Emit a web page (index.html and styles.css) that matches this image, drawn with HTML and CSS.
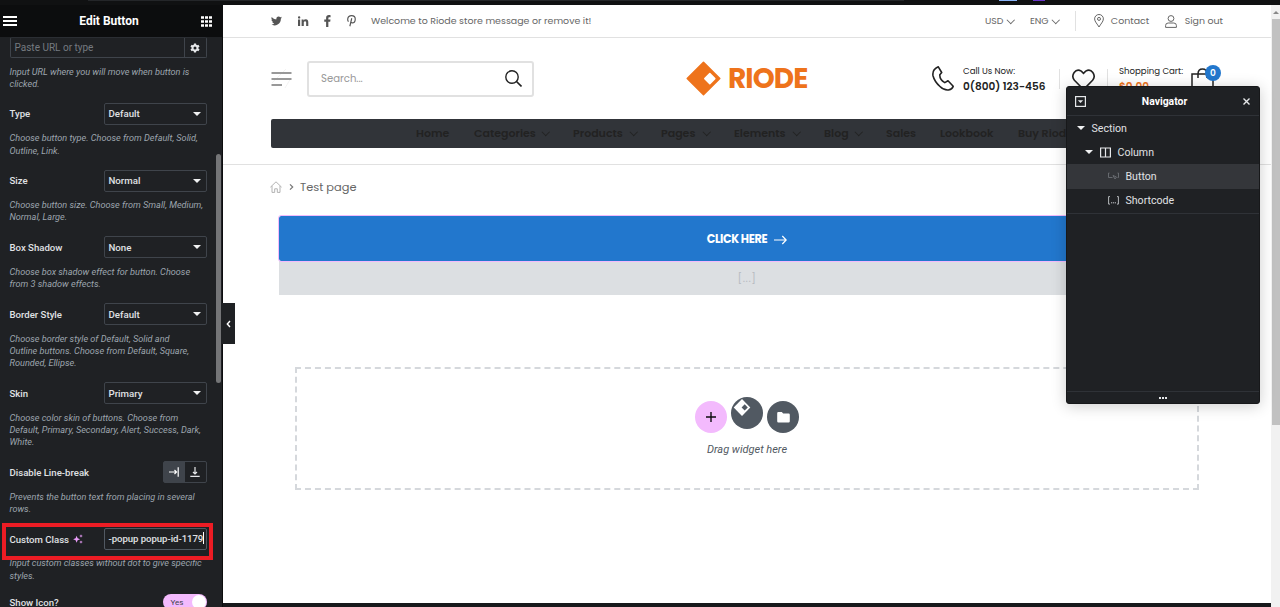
FILE: index.html
```
<!DOCTYPE html>
<html lang="en">
<head>
    <meta charset="UTF-8">
    <meta name="viewport" content="width=device-width, initial-scale=1.0">
    <title>Edit Button</title>
    <link rel="stylesheet" href="styles.css">
</head>
<body>
    <div class="browser-edge"><span class="edge-tab"></span><span class="edge-blue"></span><span class="edge-purple"></span></div>
    <div class="editor">
        <aside class="panel">
            <div class="panel-header">
                <svg width="14" height="10" viewBox="0 0 14 10"><path d="M0 1h14M0 5h14M0 9h14" stroke="#fff" stroke-width="1.8"/></svg>
                <h1>Edit Button</h1>
                <svg width="11" height="11" viewBox="0 0 11 11"><path d="M0 1.5h11M0 5.5h11M0 9.5h11" stroke="#fff" stroke-width="2.6" stroke-dasharray="3 1"/></svg>
            </div>
            <div class="panel-body">
                <div class="controls">
                    <div class="control url-control">
                        <div class="url-input">
                            <span class="placeholder">Paste URL or type</span>
                            <span class="gear"><svg width="10" height="10" viewBox="0 0 10 10"><path d="M5 .4v9.2M1 2.7l8 4.6M1 7.3l8-4.6" stroke="#e6e8ea" stroke-width="2.2"/><circle cx="5" cy="5" r="3.4" fill="#e6e8ea"/><circle cx="5" cy="5" r="1.5" fill="#1f2124"/></svg></span>
                        </div>
                        <p class="desc">Input URL where you will move when button is<br>clicked.</p>
                    </div>
                    <div class="control">
                        <div class="row"><label>Type</label><div class="select">Default</div></div>
                        <p class="desc">Choose button type. Choose from Default, Solid,<br>Outline, Link.</p>
                    </div>
                    <div class="control">
                        <div class="row"><label>Size</label><div class="select">Normal</div></div>
                        <p class="desc">Choose button size. Choose from Small, Medium,<br>Normal, Large.</p>
                    </div>
                    <div class="control">
                        <div class="row"><label>Box Shadow</label><div class="select">None</div></div>
                        <p class="desc">Choose box shadow effect for button. Choose<br>from 3 shadow effects.</p>
                    </div>
                    <div class="control">
                        <div class="row"><label>Border Style</label><div class="select">Default</div></div>
                        <p class="desc">Choose border style of Default, Solid and<br>Outline buttons. Choose from Default, Square,<br>Rounded, Ellipse.</p>
                    </div>
                    <div class="control">
                        <div class="row"><label>Skin</label><div class="select">Primary</div></div>
                        <p class="desc">Choose color skin of buttons. Choose from<br>Default, Primary, Secondary, Alert, Success, Dark,<br>White.</p>
                    </div>
                    <div class="control">
                        <div class="row">
                            <label>Disable Line-break</label>
                            <div class="choices">
                                <span class="choice active"><svg width="10" height="10" viewBox="0 0 10 10"><path d="M0 5h7.5M5.5 3L7.5 5 5.500 7M9.200 .3v9.400" fill="none" stroke="#fff" stroke-width="1.2"/></svg></span>
                                <span class="choice"><svg width="10" height="10" viewBox="0 0 10 10"><path d="M5 0v7M3 5l2 2 2-2M.3 9.300h9.400" fill="none" stroke="#e6e8ea" stroke-width="1.2"/></svg></span>
                            </div>
                        </div>
                        <p class="desc">Prevents the button text from placing in several<br>rows.</p>
                    </div>
                    <div class="control highlighted">
                        <div class="row">
                            <label>Custom Class
                                <svg class="ai" width="10" height="10" viewBox="0 0 10 10"><path d="M3.600 1.800l1 2.500 2.500 1-2.500 1-1 2.500-1-2.500-2.500-1 2.500-1zM8 .2l.5 1.300 1.300.5-1.300.5L8 3.800l-.5-1.300L6.200 2l1.300-.5zM8 6.400l.5 1.200 1.300.5-1.300.5L8 9.800l-.5-1.200-1.300-.5 1.300-.5z" fill="#eb9dfb"/></svg>
                            </label>
                            <div class="text-input">-popup popup-id-1179</div>
                        </div>
                        <p class="desc">Input custom classes without dot to give specific<br>styles.</p>
                    </div>
                    <div class="control">
                        <div class="row switch-row"><label>Show Icon?</label><div class="switch">Yes</div></div>
                    </div>
                </div>
                <div class="panel-scroll"></div>
            </div>
            <div class="collapse"><svg width="5" height="8" viewBox="0 0 5 8"><path d="M4 1L1.300 4 4 7" fill="none" stroke="#fff" stroke-width="1.4"/></svg></div>
        </aside>

        <main class="preview">
            <div class="topbar">
                <div class="social">
                    <svg width="11" height="10" viewBox="0 0 24 20"><path d="M24 2.400c-.9.400-1.800.700-2.800.800 1-.6 1.800-1.600 2.200-2.700-1 .6-2 1-3.100 1.200A4.900 4.900 0 0 0 11.900 6.200C7.800 6 4.200 4 1.700 1A4.900 4.900 0 0 0 3.200 7.500c-.8 0-1.600-.2-2.200-.6 0 2.300 1.600 4.400 3.900 4.900-.7.200-1.500.2-2.200.1.600 2 2.400 3.400 4.600 3.400A9.900 9.900 0 0 1 0 17.300 14 14 0 0 0 21.500 4.900c1-.7 1.800-1.600 2.500-2.500z" fill="#555"/></svg>
                    <svg width="11" height="10" viewBox="0 0 22 20"><path d="M0 7h4.300v13H0zM2.200.3a2.400 2.400 0 1 1 0 4.900 2.400 2.400 0 0 1 0-4.900zM7.200 7h4v1.900c.8-1.400 2.200-2.200 4.200-2.200 4.400 0 5.200 2.700 5.200 6.300v7h-4.300v-6.200c0-1.600-.1-3.400-2.200-3.400s-2.500 1.600-2.500 3.300V20H7.200z" fill="#555"/></svg>
                    <svg width="7" height="12" viewBox="0 0 14 24"><path d="M4.200 24V13.300H.5V9h3.700V5.800C4.200 2.100 6.400.2 9.800.2c1.600 0 3 .2 3.300.3v3.800h-2.200c-1.800 0-2.200.9-2.200 2.100V9H13l-.6 4.300H8.700V24z" fill="#555"/></svg>
                    <svg width="9" height="12" viewBox="0 0 18 24"><path d="M3 13.200C1.700 11.700 1.200 9.800 1.500 7.600 2 3.800 5.200 1.300 9.200 1.300c4.300 0 7.300 2.800 7.300 6.500 0 4.600-2.500 7.900-6.200 7.900-1.700 0-2.700-.8-3-1.800M9.500 6.500L5.700 22.500" fill="none" stroke="#555" stroke-width="2.300"/></svg>
                </div>
                <span class="welcome">Welcome to Riode store message or remove it!</span>
                <div class="top-links">
                    <span class="drop usd">USD</span>
                    <span class="drop eng">ENG</span>
                    <span class="top-line"></span>
                    <svg width="10" height="14" viewBox="0 0 10 14"><path d="M5 13C3.500 10.200.6 7.600.6 4.900a4.400 4.400 0 0 1 8.800 0C9.400 7.600 6.500 10.200 5 13z" fill="none" stroke="#666"/><circle cx="5" cy="4.900" r="1.500" fill="none" stroke="#666"/></svg>
                    <span class="contact">Contact</span>
                    <svg width="12" height="13" viewBox="0 0 12 13"><circle cx="6" cy="3.500" r="2.900" fill="none" stroke="#666"/><path d="M.6 12.400V10.500Q.6 8 3.200 8h5.600q2.600 0 2.600 2.500v1.900z" fill="none" stroke="#666"/></svg>
                    <span class="signout">Sign out</span>
                </div>
            </div>

            <header class="site-header">
                <div class="header-main">
                    <svg class="burger" width="21" height="22" viewBox="0 0 21 22"><path d="M1 15L15 1M14 20l6-10" stroke="#eee" stroke-width=".7"/><path d="M.5 5h20M.5 11h20M.5 17h10.500" stroke="#999" stroke-width="2"/></svg>
                    <div class="search">
                        <span>Search...</span>
                        <svg width="17" height="17" viewBox="0 0 17 17"><circle cx="7" cy="7" r="6.200" fill="none" stroke="#222" stroke-width="1.400"/><path d="M11.500 11.500l5 5" stroke="#222" stroke-width="1.600"/></svg>
                    </div>
                    <div class="logo">
                        <svg width="35" height="35" viewBox="0 0 35 35"><path d="M17.500 1.200L33.800 17.500 17.500 33.800 1.200 17.500z" fill="#ee731b" stroke="#ee731b" stroke-width="1.500" stroke-linejoin="round"/><path d="M23.800 12.600l5 5-5 5-5-5z" fill="#fff" stroke="#fff" stroke-width="1.500" stroke-linejoin="round"/></svg>
                        <span>RIODE</span>
                    </div>
                    <svg class="phone" width="22" height="25" viewBox="0 0 22 25"><path d="M6.300.8L9.700 6.500 7.800 8.800Q7.600 13.500 12.800 16.600L16 14.800 21.200 20.200Q20.500 23 16.500 24 12 24.500 8 20.500 2.500 15.500 1 9.700 0 3.500 6.300.8z" fill="none" stroke="#222" stroke-width="1.600" stroke-linejoin="round"/></svg>
                    <div class="call"><span>Call Us Now:</span><b>0(800) 123-456</b></div>
                    <span class="line"></span>
                    <svg class="heart" width="23" height="22" viewBox="0 0 23 22"><path d="M11.500 20.500L2.400 11.200C-1.600 6.500 3.500-1.500 9.300 2.200L11.500 4.300 13.700 2.200C19.500-1.500 24.600 6.500 20.600 11.200z" fill="none" stroke="#222" stroke-width="1.600"/></svg>
                    <span class="line"></span>
                    <div class="cart-text"><span>Shopping Cart:</span><b>$0.00</b></div>
                    <div class="bag">
                        <svg width="24" height="28" viewBox="0 0 24 28"><path d="M1 6h21v21H1zM7 10V6q0-5 4.500-5T16 6v4" fill="none" stroke="#222" stroke-width="1.500"/></svg>
                        <span class="badge">0</span>
                    </div>
                </div>
                <nav class="menu">
                    <a>Home</a>
                    <a class="has-sub">Categories</a>
                    <a class="has-sub">Products</a>
                    <a class="has-sub">Pages</a>
                    <a class="has-sub">Elements</a>
                    <a class="has-sub">Blog</a>
                    <a>Sales</a>
                    <a>Lookbook</a>
                    <a>Buy Riode!</a>
                </nav>
            </header>

            <div class="breadcrumb">
                <svg width="12" height="12" viewBox="0 0 12 12"><path d="M.4 6.200L6 .8l5.600 5.400M2 5v6.400h2.700V7.800h2.600v3.600H10V5" fill="none" stroke="#aaa" stroke-width=".9"/></svg>
                <svg width="5" height="8" viewBox="0 0 5 8"><path d="M1 1.300L3.700 4 1 6.700" fill="none" stroke="#777" stroke-width="1.200"/></svg>
                <span>Test page</span>
            </div>

            <section class="content">
                <a class="btn">CLICK HERE <svg width="13" height="10" viewBox="0 0 13 10"><path d="M0 5h12M8.300 1L12.200 5 8.300 9" fill="none" stroke="#fff" stroke-width="1.200"/></svg></a>
                <div class="shortcode">[...]</div>
            </section>

            <section class="drop-area">
                <div class="add-buttons">
                    <span class="round add"><svg width="10" height="10" viewBox="0 0 10 10"><path d="M5 0v10M0 5h10" stroke="#0c0d0e" stroke-width="1.400"/></svg></span>
                    <span class="round studio"><svg width="18" height="19" viewBox="0 0 18 19"><path d="M9 1l8.300 8.500L9 18 .7 9.500z" fill="#fff"/><path d="M11.700 6.200l3.100 3.200-3.100 3.200-3.100-3.200z" fill="#515962"/></svg></span>
                    <span class="round"><svg width="13" height="11" viewBox="0 0 13 11"><path d="M1.300 0h3.500l1.400 1.500h5.500q1.100 0 1.100 1.200v6.600q0 1.200-1.200 1.200H1.400Q.2 10.500.2 9.300V1.200Q.2 0 1.300 0z" fill="#fff"/></svg></span>
                </div>
                <p>Drag widget here</p>
            </section>
            <div class="preview-end"></div>
        </main>
        <div class="page-scroll"><span class="arrow"></span><span class="thumb"></span></div>
    </div>

    <div class="navigator">
        <div class="nav-head">
            <svg width="11" height="11" viewBox="0 0 11 11"><rect x=".6" y=".6" width="9.800" height="9.800" fill="none" stroke="#e6e8ea" stroke-width="1.200"/><path d="M2.800 4.200h5.400L5.500 7z" fill="#e6e8ea"/></svg>
            <h2>Navigator</h2>
            <svg width="7" height="7" viewBox="0 0 7 7"><path d="M.5.500l6 6M6.500.500l-6 6" stroke="#e6e8ea" stroke-width="1.400"/></svg>
        </div>
        <div class="tree">
            <div class="node"><span class="tri"></span>Section</div>
            <div class="node level-1"><span class="tri"></span><svg width="11" height="11" viewBox="0 0 11 11"><path d="M.6 1h9.800v9H.6zM5.500 1v9" fill="none" stroke="#e6e8ea" stroke-width="1.200"/></svg>Column</div>
            <div class="node level-2 selected"><svg width="11" height="8" viewBox="0 0 11 8"><path d="M1.500 1H.5v4.500h4M9.500 1h1v4.500h-1M5 3.500l3.500 1.500L7 7z" fill="none" stroke="#74777c" stroke-width=".8"/></svg>Button</div>
            <div class="node level-2"><svg width="11" height="9" viewBox="0 0 11 9"><path d="M2 .6H.6v7.500H2M9 .6h1.400v7.500H9" fill="none" stroke="#c5c8cc" stroke-width=".9"/><path d="M3 6.800h5" stroke="#c5c8cc" stroke-dasharray="1.200 .7"/></svg>Shortcode</div>
        </div>
        <div class="nav-foot"><i></i><i></i><i></i></div>
    </div>
</body>
</html>
```
FILE: styles.css
```
*, *::before, *::after {
    box-sizing: border-box;
}

body {
    margin: 0;
    width: 1280px;
    height: 607px;
    overflow: hidden;
    position: relative;
    background: #fff;
    font-family: Roboto, sans-serif;
}

h1, h2, p {
    margin: 0;
}

svg {
    display: block;
    flex: none;
}

.browser-edge {
    height: 5px;
    background: #101112;
    display: flex;
}

.edge-tab {
    width: 816px;
    height: 1px;
    margin-left: 88px;
    background: #242629;
}

.edge-blue {
    width: 18px;
    height: 1px;
    margin-left: 95px;
    background: #8ab4f8;
}

.edge-purple {
    width: 12px;
    height: 1px;
    margin-left: 16px;
    background: #6a35c9;
}

.editor {
    display: flex;
    height: 602px;
}

/* Left panel */
.panel {
    position: relative;
    width: 223px;
    flex: none;
    background: #1f2124;
    color: #e0e2e5;
    border-right: 1px solid #0c0d0e;
}

.panel-header {
    height: 32px;
    padding: 0 10px 0 3px;
    display: flex;
    align-items: center;
    justify-content: space-between;
    background: #0c0d0e;
}

.panel-header h1 {
    font-size: 12px;
    font-weight: 700;
    color: #fff;
}

.panel-body {
    display: flex;
    height: 570px;
    overflow: hidden;
}

.controls {
    width: 216px;
    padding-left: 9.5px;
}

.panel-scroll {
    width: 5px;
    height: 229px;
    margin-top: 117px;
    border-radius: 3px;
    background: #747577;
}

.control {
    width: 197px;
    padding-bottom: 12.9px;
    position: relative;
}

.row {
    display: flex;
    align-items: center;
    justify-content: space-between;
    height: 22px;
}

.row label {
    display: flex;
    align-items: center;
    gap: 4px;
    font-size: 9.6px;
    font-weight: 500;
}

.desc {
    padding-top: 7.4px;
    font-size: 9.15px;
    line-height: 12.25px;
    font-style: italic;
    white-space: nowrap;
    color: #9da5ae;
}

.url-control {
    padding-bottom: 12.4px;
}

.url-control .desc {
    padding-top: 8px;
}

.url-input {
    display: flex;
    height: 21px;
    border: 1px solid #3f444b;
    border-top-color: #2b2e33;
    border-radius: 2px;
    font-size: 10px;
    line-height: 19px;
}

.placeholder {
    flex: 1;
    padding-left: 4px;
    color: #757a80;
}

.gear {
    width: 22px;
    display: flex;
    align-items: center;
    justify-content: center;
    border-left: 1px solid #3f444b;
}

.select {
    width: 103px;
    height: 22px;
    padding: 0 5px 0 4px;
    display: flex;
    align-items: center;
    justify-content: space-between;
    border: 1px solid #3f444b;
    border-radius: 2px;
    font-size: 9.7px;
    font-weight: 500;
}

.select::after, .tri {
    content: "";
    border: 4px solid transparent;
    border-top: 4px solid #f0f1f2;
    border-bottom: 0;
}

.choices {
    display: flex;
    width: 44px;
    height: 22px;
    border: 1px solid #3f444b;
    border-radius: 2px;
}

.choice {
    flex: 1;
    display: flex;
    align-items: center;
    justify-content: center;
}

.choice.active {
    background: #3f444b;
}

.text-input {
    width: 103px;
    height: 22px;
    padding-left: 4px;
    border: 1px solid #515962;
    border-radius: 2px;
    font-size: 9.6px;
    font-weight: 500;
    letter-spacing: -.05px;
    line-height: 20px;
    white-space: nowrap;
}

.text-input::after {
    content: "";
    display: inline-block;
    width: 1px;
    height: 12px;
    vertical-align: -2px;
    background: #fff;
}

/* red callout frame over the field */
.highlighted::before {
    content: "";
    position: absolute;
    left: -7.5px;
    top: -5px;
    width: 211px;
    height: 37px;
    border: 4px solid #ed1c24;
}

.switch-row {
    height: 15px;
}

.switch {
    width: 44px;
    height: 16px;
    padding: 1px 1px 1px 8px;
    display: flex;
    align-items: center;
    justify-content: space-between;
    border-radius: 8px;
    background: #f3bafd;
    color: #3f444b;
    font-size: 8px;
}

.switch::after {
    content: "";
    width: 14px;
    height: 14px;
    border-radius: 50%;
    background: #fff;
}

.collapse {
    position: absolute;
    left: 222px;
    top: 298px;
    width: 13px;
    height: 41px;
    display: flex;
    align-items: center;
    justify-content: center;
    background: #1f2124;
}

/* Shop preview */
.preview {
    width: 1048px;
    flex: none;
    display: flex;
    flex-direction: column;
    font-family: Poppins, Inter, sans-serif;
    color: #666;
}

.topbar {
    height: 33px;
    padding: 0 48px;
    display: flex;
    align-items: center;
    border-bottom: 1px solid #e1e1e1;
    font-size: 9.45px;
    white-space: nowrap;
}

.social {
    display: flex;
    align-items: center;
    gap: 15.5px;
    width: 100px;
}

.top-links {
    display: flex;
    align-items: center;
    margin-left: auto;
    width: 238px;
}

.drop {
    display: flex;
    align-items: center;
    justify-content: space-between;
    width: 30px;
    font-size: 9.4px;
}

.drop::after, .has-sub::after {
    content: "";
    width: 5.5px;
    height: 5.5px;
    margin: 0 1px 3px 0;
    border: solid currentColor;
    border-width: 0 1.4px 1.4px 0;
    transform: rotate(45deg);
}

.eng {
    margin-left: 15px;
}

.top-line {
    width: 1px;
    height: 20px;
    margin: 0 18px 0 15px;
    background: #e1e1e1;
}

.contact {
    width: 61px;
    padding-left: 7px;
}

.signout {
    padding-left: 8px;
}

.site-header {
    height: 127px;
    padding: 0 48px;
    border-bottom: 1px solid #e1e1e1;
}

.header-main {
    height: 81px;
    display: flex;
    align-items: center;
    white-space: nowrap;
}

.search {
    width: 227px;
    height: 36px;
    margin-left: 15px;
    padding: 0 10px 0 12px;
    display: flex;
    align-items: center;
    justify-content: space-between;
    border: 2px solid #e1e1e1;
    border-radius: 3px;
    font-size: 10.1px;
    color: #999;
}

.logo {
    display: flex;
    align-items: center;
    gap: 7px;
    width: 246px;
    margin-left: 152px;
    color: #ee731b;
    font-size: 28px;
    font-weight: 700;
    letter-spacing: -.9px;
}

.call, .cart-text {
    display: flex;
    flex-direction: column;
    font-size: 8.6px;
    line-height: 15px;
    color: #222;
}

.call {
    width: 96px;
    margin-left: 9px;
}

.call b {
    font-size: 10.5px;
    font-weight: 600;
}

.line {
    width: 1px;
    height: 20px;
    background: #e1e1e1;
}

.heart {
    margin: 2px 12px 0;
}

.cart-text {
    width: 72px;
    margin-left: 11px;
    padding-top: 1px;
}

.cart-text b {
    font-size: 10.5px;
    font-weight: 600;
    color: #ee731b;
}

.bag {
    position: relative;
    margin-top: 6px;
}

.badge {
    position: absolute;
    left: 14px;
    top: -3px;
    width: 16px;
    height: 16px;
    border-radius: 50%;
    background: #2277cd;
    color: #fff;
    font-size: 9px;
    font-weight: 600;
    line-height: 16px;
    text-align: center;
}

.menu {
    height: 29px;
    padding-left: 145px;
    display: grid;
    grid-template-columns: 58px 99px 88px 73px 90px 62px 54px 78px 100px;
    align-items: center;
    background: #313439;
    border-radius: 2px;
    color: #222;
    font-size: 11px;
    font-weight: 600;
    white-space: nowrap;
    overflow: hidden;
}

.has-sub {
    display: flex;
    align-items: center;
    justify-content: space-between;
    padding-right: 24px;
}

.breadcrumb {
    height: 44px;
    padding-left: 47px;
    display: flex;
    align-items: center;
    gap: 6.5px;
    font-size: 11.4px;
}

.content {
    margin: 7px 56px 0;
}

.btn {
    height: 45px;
    padding-top: 2px;
    display: flex;
    align-items: center;
    justify-content: center;
    gap: 7px;
    background: #2277cd;
    border-radius: 2px;
    outline: 1px solid #f3bafd;
    color: #fff;
    font-size: 11.3px;
    font-weight: 700;
    letter-spacing: -.35px;
}

.shortcode {
    height: 34px;
    line-height: 34px;
    text-align: center;
    background: #dcdfe2;
    color: #b9bdc2;
    font-size: 11px;
    letter-spacing: .6px;
}

.drop-area {
    height: 123px;
    margin: 72px 72px 0;
    padding-top: 28px;
    border: 2px dashed #d5d8dc;
    font-family: Roboto, sans-serif;
    text-align: center;
}

.add-buttons {
    display: flex;
    justify-content: center;
    gap: 4px;
}

.round {
    width: 32.3px;
    height: 32.3px;
    margin-top: 4px;
    display: flex;
    align-items: center;
    justify-content: center;
    border-radius: 50%;
    background: #515962;
}

.round.add {
    background: #f3bafd;
}

.round.studio {
    margin-top: 0;
    padding: 0 10px 11px 0;
}

.drop-area p {
    padding-top: 10px;
    font-size: 11px;
    font-style: italic;
    color: #515962;
}

.preview-end {
    height: 4px;
    margin-top: auto;
    background: #17191b;
}

.page-scroll {
    width: 9px;
    padding: 0 0 0 1px;
    background: #f1f1f1;
    display: flex;
    flex-direction: column;
    align-items: center;
}

.arrow {
    margin: 6px 0 5px;
    border: 3px solid transparent;
    border-top: 0;
    border-bottom: 3px solid #888;
}

.thumb {
    width: 8px;
    height: 406px;
    background: #c1c1c1;
}

/* Floating navigator */
.navigator {
    position: absolute;
    left: 1066px;
    top: 86px;
    width: 194px;
    height: 318px;
    display: flex;
    flex-direction: column;
    background: #1f2124;
    border: 1px solid #17181a;
    border-radius: 3px;
    box-shadow: 0 2px 15px rgba(0, 0, 0, 0.2);
    color: #e0e2e5;
}

.nav-head {
    height: 29px;
    padding: 0 9px 0 8px;
    display: flex;
    align-items: center;
    justify-content: space-between;
    border-bottom: 1px solid #2f3237;
}

.nav-head h2 {
    font-size: 10.4px;
    font-weight: 700;
    color: #fff;
}

.tree {
    border-bottom: 1px solid #2f3237;
}

.node {
    height: 24.2px;
    padding-left: 9.5px;
    display: flex;
    align-items: center;
    gap: 7px;
    font-size: 10.6px;
}

.level-1 {
    padding-left: 17.5px;
}

.level-2 {
    padding-left: 40.5px;
}

.selected {
    background: #34363a;
}

.nav-foot {
    height: 12px;
    margin-top: auto;
    display: flex;
    align-items: center;
    justify-content: center;
    gap: 1px;
    border-top: 1px solid #2f3237;
}

.nav-foot i {
    width: 2px;
    height: 2px;
    background: #e6e8ea;
}
```
